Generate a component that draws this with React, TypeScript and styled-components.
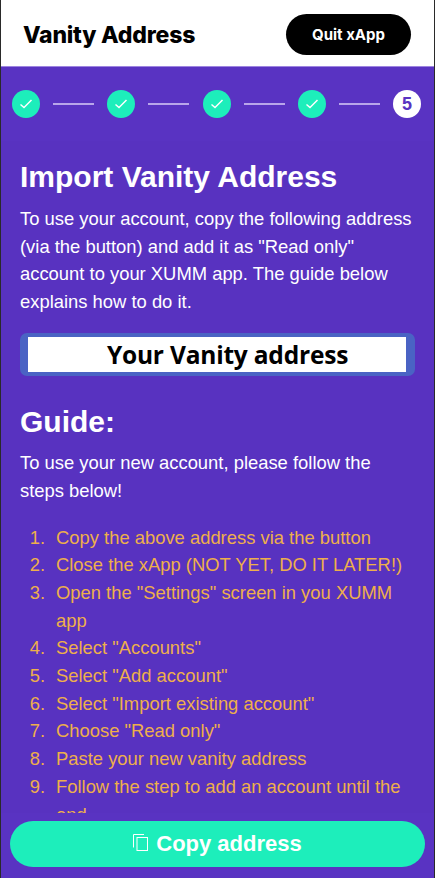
import React from "react";
import styled, { createGlobalStyle } from "styled-components";

const Global = createGlobalStyle`
  html, body {
    margin: 0;
    padding: 0;
    height: 100%;
    background: #5933c2;
    overflow: hidden;
  }
  #root {
    height: 100%;
  }
`;

const Page = styled.div`
  height: 878px;
  display: flex;
  flex-direction: column;
  background: #5933c2;
  border-left: 1px solid #2a2a2a;
  border-right: 1px solid #2a2a2a;
  font-family: "Liberation Sans", Arial, sans-serif;
  color: #fff;
`;

const Header = styled.header`
  height: 67px;
  flex: none;
  box-sizing: border-box;
  display: flex;
  align-items: center;
  justify-content: space-between;
  padding: 3px 23px 0 22px;
  background: #fff;
  border-bottom: 1px solid #9d84e0;
`;

const AppTitle = styled.h1`
  margin: 0;
  font-family: Inter, sans-serif;
  font-size: 23px;
  font-weight: 800;
  letter-spacing: -0.2px;
  color: #000;
`;

const QuitButton = styled.button`
  width: 125px;
  height: 41px;
  border: 0;
  border-radius: 21px;
  background: #000;
  color: #fff;
  font-family: Inter, sans-serif;
  font-size: 15px;
  font-weight: 700;
`;

const Stepper = styled.div`
  height: 74px;
  flex: none;
  box-sizing: border-box;
  display: flex;
  align-items: center;
  justify-content: space-between;
  padding: 0 13px 0 11px;
`;

const Circle = styled.div<{ $done?: boolean }>`
  width: 28px;
  height: 28px;
  flex: none;
  border-radius: 50%;
  display: flex;
  align-items: center;
  justify-content: center;
  background: ${(p) => (p.$done ? "#1deebb" : "#fff")};
  color: #5933c2;
  font-size: 18px;
  font-weight: 700;
`;

const StepLine = styled.div`
  width: 41px;
  height: 2px;
  background: #b9a6ea;
`;

const Content = styled.main`
  flex: 1;
  min-height: 0;
  overflow: hidden;
  box-sizing: border-box;
  padding: 19px 19px 0;
  background: #5832c0;
`;

const Title = styled.h2`
  margin: 0 0 10px;
  font-size: 30px;
  line-height: 34px;
  font-weight: 700;
`;

const LeadTitle = styled(Title)`
  margin-bottom: 11px;
`;

const Text = styled.p`
  margin: 0;
  font-size: 18.4px;
  line-height: 27.6px;
`;

const AddressBox = styled.div`
  box-sizing: border-box;
  height: 43px;
  margin: 18px 0 29px;
  padding: 4px 9px 4px 8px;
  border-radius: 7px;
  background: #4a63c4;
`;

const AddressInner = styled.div`
  height: 35px;
  padding-left: 21px;
  background: #fff;
  color: #000;
  text-align: center;
  font-family: "Open Sans", sans-serif;
  font-size: 24.5px;
  line-height: 36px;
  font-weight: 700;
  letter-spacing: -0.2px;
`;

const Steps = styled.ol`
  margin: 19px 0 0;
  padding: 0;
  list-style: none;
  color: #eeaf4b;
  font-size: 18.4px;
  line-height: 27.7px;
`;

const Step = styled.li`
  display: flex;
  gap: 11px;
`;

const StepNumber = styled.span`
  width: 25px;
  flex: none;
  text-align: right;
`;

const Footer = styled.footer`
  flex: none;
  height: 65px;
  box-sizing: border-box;
  padding: 8px 9px 0;
`;

const CopyButton = styled.button`
  width: 100%;
  height: 46px;
  border: 0;
  border-radius: 23px;
  display: flex;
  align-items: center;
  justify-content: center;
  gap: 8px;
  background: #1deebb;
  color: #fff;
  font-family: "Liberation Sans", Arial, sans-serif;
  font-size: 22px;
  font-weight: 700;
`;

const CopySvg = styled.svg`
  margin-top: -3px;
`;

const Check = () => (
  <svg width="14" height="14" viewBox="0 0 14 14" fill="none">
    <path d="M1.5 7.5 5 10.5 12.5 3" stroke="#fff" strokeWidth="1.5" />
  </svg>
);

const CopyIcon = () => (
  <CopySvg width="15" height="17" viewBox="0 0 15 17" fill="none" stroke="#fff" strokeWidth="1">
    <path d="M.5 13.5V.5H11" />
    <rect x="4" y="3.5" width="10.5" height="13" />
  </CopySvg>
);

const guide = [
  "Copy the above address via the button",
  "Close the xApp (NOT YET, DO IT LATER!)",
  'Open the "Settings" screen in you XUMM app',
  'Select "Accounts"',
  'Select "Add account"',
  'Select "Import existing account"',
  'Choose "Read only"',
  "Paste your new vanity address",
  "Follow the step to add an account until the end",
];

const App: React.FC = () => (
  <>
    <Global />
    <Page>
      <Header>
        <AppTitle>Vanity Address</AppTitle>
        <QuitButton>Quit xApp</QuitButton>
      </Header>
      <Stepper>
        {[0, 1, 2, 3].map((i) => (
          <React.Fragment key={i}>
            <Circle $done>
              <Check />
            </Circle>
            <StepLine />
          </React.Fragment>
        ))}
        <Circle>5</Circle>
      </Stepper>
      <Content>
        <LeadTitle>Import Vanity Address</LeadTitle>
        <Text>
          To use your account, copy the following address (via the button) and
          add it as "Read only" account to your XUMM app. The guide below
          explains how to do it.
        </Text>
        <AddressBox>
          <AddressInner>Your Vanity address</AddressInner>
        </AddressBox>
        <Title>Guide:</Title>
        <Text>To use your new account, please follow the steps below!</Text>
        <Steps>
          {guide.map((g, i) => (
            <Step key={g}>
              <StepNumber>{i + 1}.</StepNumber>
              <span>{g}</span>
            </Step>
          ))}
        </Steps>
      </Content>
      <Footer>
        <CopyButton>
          <CopyIcon />
          Copy address
        </CopyButton>
      </Footer>
    </Page>
  </>
);

export default App;
